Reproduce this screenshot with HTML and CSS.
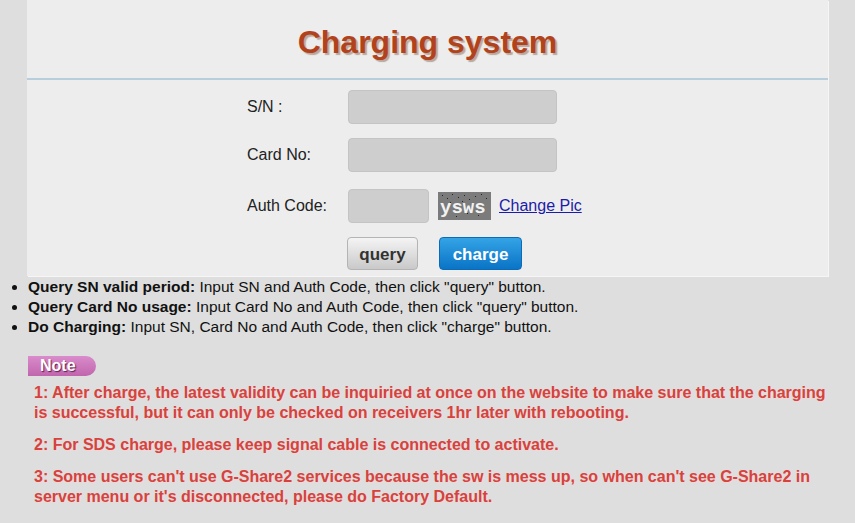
FILE: index.html
```html
<!DOCTYPE html>
<html lang="en">
<head>
  <meta charset="UTF-8">
  <title>Charging system</title>
  <link rel="stylesheet" href="styles.css">
</head>
<body>

<div class="panel">
  <div class="header">
    <h1>Charging system</h1>
  </div>

  <form class="charge-form" onsubmit="return false">
    <div class="row">
      <label for="sn">S/N :</label>
      <input type="text" id="sn" class="field">
    </div>
    <div class="row">
      <label for="card">Card No:</label>
      <input type="text" id="card" class="field">
    </div>
    <div class="row row-auth">
      <label for="auth">Auth Code:</label>
      <input type="text" id="auth" class="field short">
      <svg class="captcha" width="53" height="28" viewBox="0 0 53 28">
        <rect width="53" height="28" fill="#7b7b7b"/>
        <g fill="#222">
          <rect x="4" y="3" width="1" height="1"/><rect x="9" y="6" width="1" height="1"/>
          <rect x="14" y="2" width="1" height="1"/><rect x="20" y="5" width="1" height="1"/>
          <rect x="26" y="3" width="1" height="1"/><rect x="31" y="7" width="1" height="1"/>
          <rect x="37" y="4" width="1" height="1"/><rect x="43" y="2" width="1" height="1"/>
          <rect x="48" y="6" width="1" height="1"/><rect x="7" y="22" width="1" height="1"/>
          <rect x="18" y="24" width="1" height="1"/><rect x="29" y="21" width="1" height="1"/>
          <rect x="40" y="23" width="1" height="1"/><rect x="12" y="10" width="1" height="1"/>
          <rect x="35" y="11" width="1" height="1"/><rect x="24" y="9" width="1" height="1"/>
        </g>
        <text x="2" y="21" class="captcha-text">ysws</text>
      </svg>
      <a href="#" class="change-pic">Change Pic</a>
    </div>
    <div class="row buttons">
      <span></span>
      <div class="btn-group">
        <button class="btn btn-query">query</button>
        <button class="btn btn-charge">charge</button>
      </div>
    </div>
  </form>
</div>

<ul class="help">
  <li><b>Query SN valid period:</b> Input SN and Auth Code, then click "query" button.</li>
  <li><b>Query Card No usage:</b> Input Card No and Auth Code, then click "query" button.</li>
  <li><b>Do Charging:</b> Input SN, Card No and Auth Code, then click "charge" button.</li>
</ul>

<div class="notes">
  <span class="note-tag">Note</span>
  <p>1: After charge, the latest validity can be inquiried at once on the website to make sure that the charging is successful, but it can only be checked on receivers 1hr later with rebooting.</p>
  <p>2: For SDS charge, please keep signal cable is connected to activate.</p>
  <p>3: Some users can't use G-Share2 services because the sw is mess up, so when can't see G-Share2 in server menu or it's disconnected, please do Factory Default.</p>
</div>

</body>
</html>
```

FILE: styles.css
```css
body {
  margin: 0;
  font-family: "Liberation Sans", Arial, sans-serif;
  background-color: #dedede;
  color: #222;
}
.panel {
  margin-left: 27px;
  width: 801px;
  height: 276px;
  background-color: #ededed;
  box-shadow: 1px 1px 0 #f6f6f6;
}
.header {
  height: 80px;
  border-bottom: 2px solid #b9cedd;
  box-sizing: border-box;
  text-align: center;
}
.header h1 {
  margin: 0;
  padding-top: 24px;
  font-size: 32px;
  letter-spacing: 0;
  color: #b2421b;
  text-shadow: 2px 2px 1px #b9a89e;
}
.charge-form {
  padding: 10px 0 0 220px;
}
.row {
  display: grid;
  grid-template-columns: 101px auto;
  align-items: center;
  margin-bottom: 14px;
  font-size: 16px;
}
.row-auth {
  display: flex;
  margin-top: 17px;
}
.row-auth label {
  width: 101px;
}
.field {
  width: 209px;
  height: 34px;
  box-sizing: border-box;
  border: 1px solid #c4c4c4;
  border-radius: 4px;
  background-color: #cecece;
}
.field.short {
  width: 81px;
}
.captcha {
  margin-left: 9px;
  display: block;
}
.captcha-text {
  font-family: "Liberation Mono", monospace;
  font-weight: bold;
  font-size: 19px;
  fill: #f2f2f2;
}
.change-pic {
  margin-left: 8px;
  color: #1c1ca8;
  text-decoration: underline;
}
.buttons {
  margin-top: 14px;
}
.btn-group {
  display: flex;
  gap: 21px;
  margin-left: -1px;
}
.btn {
  height: 33px;
  padding: 3px 0 0;
  font-family: "Liberation Sans", Arial, sans-serif;
  font-size: 17px;
  font-weight: bold;
  border-radius: 4px;
  cursor: pointer;
}
.btn-query {
  width: 71px;
  color: #333;
  border: 1px solid #b4b4b4;
  background: linear-gradient(#f4f4f4, #c9c9c9);
}
.btn-charge {
  width: 83px;
  color: white;
  border: 1px solid #0b6bb6;
  background: linear-gradient(#34a3e6, #0a74c6);
}
.help {
  margin: 0;
  padding-left: 28px;
  font-size: 15.5px;
  line-height: 20px;
  color: #111;
}
.help li {
  padding-top: 1px;
  margin-bottom: -1px;
}
.notes {
  padding: 20px 0 0 28px;
}
.note-tag {
  display: inline-block;
  width: 56px;
  height: 20px;
  padding-left: 12px;
  line-height: 20px;
  border-radius: 0 10px 10px 0;
  background: linear-gradient(#d98ccb, #c165ad);
  color: white;
  font-weight: bold;
  font-size: 16px;
  text-shadow: 1px 1px 1px #5a2050;
}
.notes p {
  margin: 7px 0 12px 6px;
  width: 800px;
  font-size: 16px;
  font-weight: bold;
  line-height: 20px;
  color: #d5433f;
  text-shadow: 1px 1px 0 #f3d6d4;
}
```
